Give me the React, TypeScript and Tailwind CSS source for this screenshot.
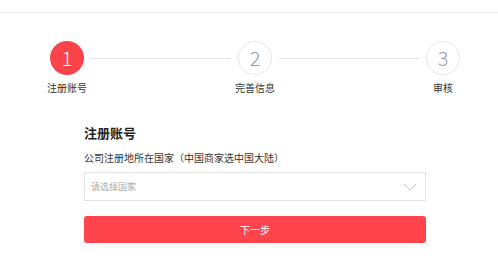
import React from 'react';

const steps = ['注册账号', '完善信息', '审核'];

const StepCircle: React.FC<{ n: number; label: string; active?: boolean }> = ({ n, label, active }) => (
  <div className="flex flex-col items-center w-[34px] shrink-0">
    <div
      className={`w-[34px] h-[34px] rounded-full flex items-center justify-center text-[20px] font-light leading-none ${
        active ? 'bg-[#f9434b] text-white' : 'border border-[#e6e6e6] text-[#999]'
      }`}
    >
      {n}
    </div>
    <div className="mt-[6px] whitespace-nowrap text-[10px] leading-[14px] text-[#333]">{label}</div>
  </div>
);

export default function App() {
  return (
    <div className="w-[498px] h-[265px] bg-white overflow-hidden font-['Noto_Sans_CJK_SC','Noto_Sans',sans-serif]">
      <div className="h-[13px] border-b border-[#ececec]" />

      {/* 步骤条 */}
      <div className="flex items-start pl-[50px] pr-[38px] mt-[28px]">
        {steps.map((s, i) => (
          <React.Fragment key={s}>
            <StepCircle n={i + 1} label={s} active={i === 0} />
            {i < steps.length - 1 && <div className="flex-1 h-px bg-[#e3e3e3] mt-[17px] mx-[7px]" />}
          </React.Fragment>
        ))}
      </div>

      {/* 表单 */}
      <div className="mx-[84px] w-[342px] mt-[29px]">
        <h2 className="text-[13px] leading-[18px] font-bold text-[#222]">注册账号</h2>
        <p className="mt-[8px] text-[10px] leading-[16px] text-[#333]">公司注册地所在国家（中国商家选中国大陆）</p>
        <div className="mt-[6px] h-[29px] border border-[#e4e4e4] flex items-center justify-between pl-[6px] pr-[8px]">
          <span className="text-[9px] text-[#aaa]">请选择国家</span>
          <svg width="14" height="8" viewBox="0 0 14 8" fill="none">
            <path d="M1 1l6 6 6-6" stroke="#c8c8c8" strokeWidth="1" />
          </svg>
        </div>
        <button className="mt-[15px] w-full h-[27px] rounded-[3px] bg-[#ff444d] text-white text-[10px] flex items-center justify-center">
          下一步
        </button>
      </div>
    </div>
  );
}
